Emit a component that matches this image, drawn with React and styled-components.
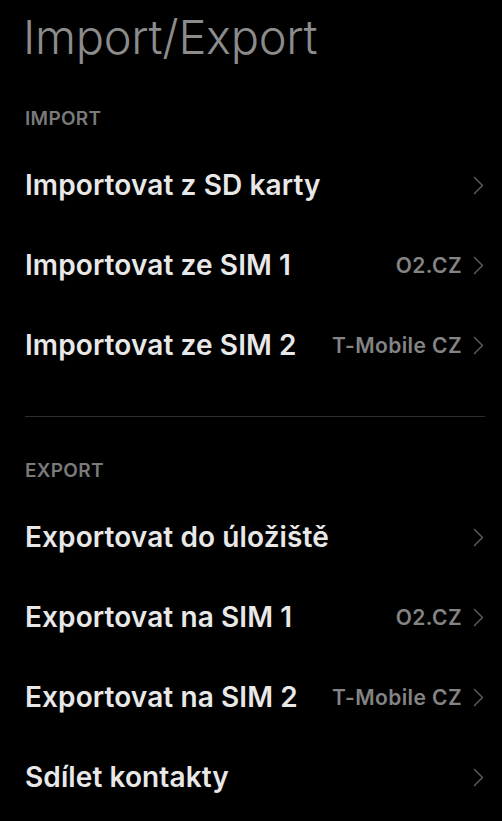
import React from 'react';
import styled, { createGlobalStyle } from 'styled-components';

// --- Styled Components ---

const GlobalStyle = createGlobalStyle`
  html, body {
    margin: 0;
    padding: 0;
    background: #000;
  }
  body {
    font-family: Inter, "Noto Sans", "Liberation Sans", sans-serif;
    -webkit-font-smoothing: antialiased;
  }
`;

const Screen = styled.div`
  width: 502px;
  min-height: 821px;
  background: #000;
  padding: 0 17px 0 25px;
  box-sizing: border-box;
  overflow: hidden;
`;

const Title = styled.h1`
  margin: 0;
  height: 74px;
  line-height: 74px;
  font-size: 47px;
  font-weight: 300;
  color: #8c8c8c;
  letter-spacing: -0.3px;
  margin-left: -2px;
`;

const Section = styled.section`
  display: flex;
  flex-direction: column;
  padding-top: ${props => props.$top}px;
  padding-bottom: ${props => props.$bottom || 0}px;
  border-bottom: ${props => (props.$divider ? '1px solid #2e2e2e' : 'none')};
`;

const SectionHeader = styled.div`
  height: 52px;
  line-height: 52px;
  font-size: 19px;
  font-weight: 600;
  color: #7a7a7a;
  letter-spacing: 0.3px;
`;

const Row = styled.div`
  height: 80px;
  display: flex;
  align-items: center;
  gap: 11px;
  padding-right: 1px;
`;

const Label = styled.div`
  flex: 1;
  font-size: 28px;
  font-weight: 600;
  color: #e8e8e8;
  white-space: nowrap;
  letter-spacing: 0.1px;
`;

const Value = styled.div`
  font-size: 21px;
  font-weight: 600;
  color: #848484;
  white-space: nowrap;
  letter-spacing: 0.4px;
`;

const Chevron = styled.svg`
  width: 11px;
  height: 19px;
  flex: none;
`;

// --- Data ---

const importRows = [
  { label: 'Importovat z SD karty' },
  { label: 'Importovat ze SIM 1', value: 'O2.CZ' },
  { label: 'Importovat ze SIM 2', value: 'T-Mobile CZ' },
];

const exportRows = [
  { label: 'Exportovat do úložiště' },
  { label: 'Exportovat na SIM 1', value: 'O2.CZ' },
  { label: 'Exportovat na SIM 2', value: 'T-Mobile CZ' },
  { label: 'Sdílet kontakty' },
];

// --- Component ---

function ChevronIcon() {
  return (
    <Chevron viewBox="0 0 11 19">
      <polyline
        points="1.5,1.5 9.5,9.5 1.5,17.5"
        fill="none"
        stroke="#575757"
        strokeWidth="1.6"
        strokeLinecap="round"
        strokeLinejoin="round"
      />
    </Chevron>
  );
}

function ListRow({ label, value }) {
  return (
    <Row>
      <Label>{label}</Label>
      {value && <Value>{value}</Value>}
      <ChevronIcon />
    </Row>
  );
}

export default function App() {
  return (
    <>
      <GlobalStyle />
      <Screen>
        <Title>Import/Export</Title>
        <Section $top={19} $bottom={31} $divider>
          <SectionHeader>IMPORT</SectionHeader>
          {importRows.map(r => <ListRow key={r.label} {...r} />)}
        </Section>
        <Section $top={28}>
          <SectionHeader>EXPORT</SectionHeader>
          {exportRows.map(r => <ListRow key={r.label} {...r} />)}
        </Section>
      </Screen>
    </>
  );
}
